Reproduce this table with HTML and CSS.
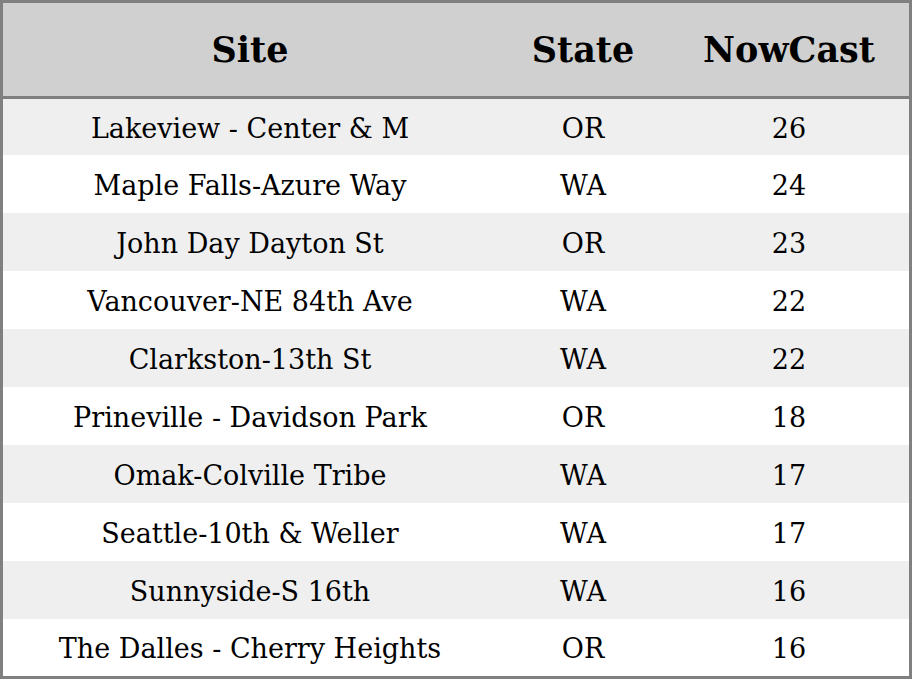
FILE: index.html
```html
<!DOCTYPE html>
<html>
<head>
<meta charset="utf-8">
<link rel="stylesheet" href="styles.css">
</head>
<body>
<table class="sites">
  <thead>
    <tr class="head-row"><th class="c-site">Site</th><th class="c-state">State</th><th class="c-now">NowCast</th></tr>
  </thead>
  <tbody>
    <tr class="r-first"><td>Lakeview - Center &amp; M</td><td>OR</td><td>26</td></tr>
    <tr><td>Maple Falls-Azure Way</td><td>WA</td><td>24</td></tr>
    <tr><td>John Day Dayton St</td><td>OR</td><td>23</td></tr>
    <tr><td>Vancouver-NE 84th Ave</td><td>WA</td><td>22</td></tr>
    <tr><td>Clarkston-13th St</td><td>WA</td><td>22</td></tr>
    <tr><td>Prineville - Davidson Park</td><td>OR</td><td>18</td></tr>
    <tr><td>Omak-Colville Tribe</td><td>WA</td><td>17</td></tr>
    <tr><td>Seattle-10th &amp; Weller</td><td>WA</td><td>17</td></tr>
    <tr><td>Sunnyside-S 16th</td><td>WA</td><td>16</td></tr>
    <tr class="r-last"><td>The Dalles - Cherry Heights</td><td>OR</td><td>16</td></tr>
  </tbody>
</table>
</body>
</html>
```
FILE: styles.css
```css
html, body {
  margin: 0;
  padding: 0;
  background: #ffffff;
}
.sites {
  width: 912px;
  border-collapse: separate;
  border-spacing: 0;
  border: 3px solid #808080;
  font-family: "DejaVu Serif", serif;
  color: #000;
  table-layout: fixed;
}
.sites th, .sites td {
  padding: 0;
  text-align: center;
  vertical-align: middle;
}
.c-site { width: 494px; }
.c-state { width: 172px; }
.c-now { width: 240px; }
.head-row th {
  height: 93px;
  background: #d0d0d0;
  font-size: 35px;
  font-weight: bold;
  border-bottom: 3px solid #808080;
}
.sites td {
  height: 56px;
  padding-top: 2px;
  font-size: 27px;
}
.sites tbody tr:nth-child(odd) td {
  background: #efefef;
}
.sites tbody tr.r-first td { height: 54px; }
.sites tbody tr.r-last td { height: 55px; }
```
